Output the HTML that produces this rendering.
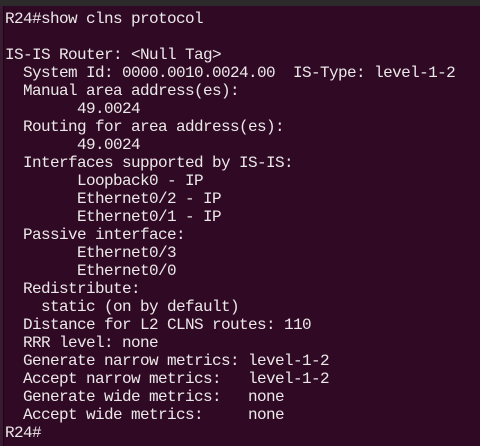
<!DOCTYPE html>
<html><head><style>
body{margin:0;width:480px;height:446px;overflow:hidden;background:#300a24;position:relative}
.top{position:absolute;left:0;top:0;width:480px;height:6px;background:#2c2a2b}
.lb{position:absolute;left:0;top:6px;width:3px;height:440px;background:#3a1a30}
.lbl{position:absolute;left:3px;top:6px;width:1px;height:440px;background:#1a0612}
pre{position:absolute;left:5px;top:10px;margin:0;font-family:"Liberation Mono",monospace;font-size:16px;letter-spacing:-0.6px;line-height:17.98px;color:#ebe8e9}
</style></head><body>
<div class="top"></div><div class="lb"></div><div class="lbl"></div>
<pre>R24#show clns protocol

IS-IS Router: &lt;Null Tag&gt;
  System Id: 0000.0010.0024.00  IS-Type: level-1-2
  Manual area address(es):
        49.0024
  Routing for area address(es):
        49.0024
  Interfaces supported by IS-IS:
        Loopback0 - IP
        Ethernet0/2 - IP
        Ethernet0/1 - IP
  Passive interface:
        Ethernet0/3
        Ethernet0/0
  Redistribute:
    static (on by default)
  Distance for L2 CLNS routes: 110
  RRR level: none
  Generate narrow metrics: level-1-2
  Accept narrow metrics:   level-1-2
  Generate wide metrics:   none
  Accept wide metrics:     none
R24#</pre>
</body></html>
